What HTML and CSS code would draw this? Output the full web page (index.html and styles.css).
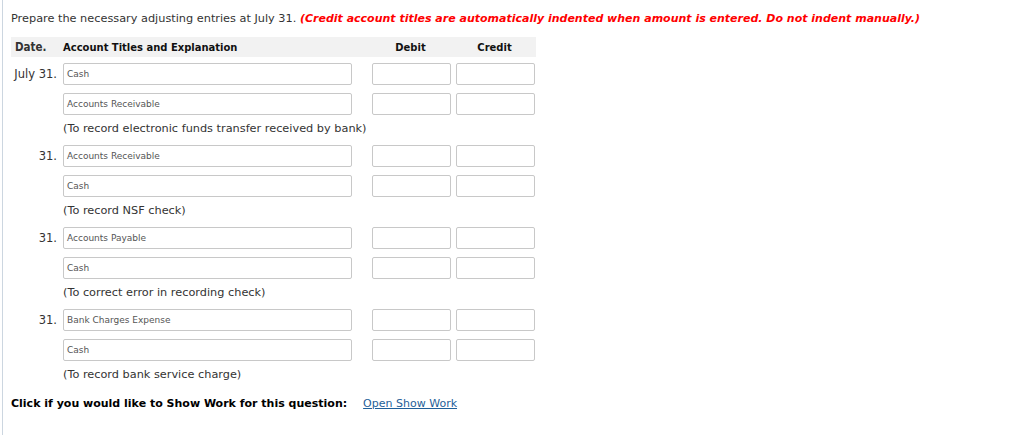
FILE: index.html
```html
<!DOCTYPE html>
<html>
<head>
<meta charset="utf-8">
<link rel="stylesheet" href="styles.css">
</head>
<body>
<div class="page">
  <p class="intro">Prepare the necessary adjusting entries at July 31. <em class="warn">(Credit account titles are automatically indented when amount is entered. Do not indent manually.)</em></p>
  <div class="journal">
    <div class="head">
      <div class="c-date">Date.</div>
      <div class="c-acct">Account Titles and Explanation</div>
      <div class="c-amt">Debit</div>
      <div class="c-amt">Credit</div>
    </div>

    <div class="row">
      <div class="c-date">July 31.</div>
      <div class="c-acct"><div class="field">Cash</div></div>
      <div class="c-amt"><div class="field"></div></div>
      <div class="c-amt"><div class="field"></div></div>
    </div>
    <div class="row">
      <div class="c-date"></div>
      <div class="c-acct"><div class="field">Accounts Receivable</div></div>
      <div class="c-amt"><div class="field"></div></div>
      <div class="c-amt"><div class="field"></div></div>
    </div>
    <div class="expl"><div class="c-date"></div><div class="c-acct">(To record electronic funds transfer received by bank)</div></div>

    <div class="row">
      <div class="c-date">31.</div>
      <div class="c-acct"><div class="field">Accounts Receivable</div></div>
      <div class="c-amt"><div class="field"></div></div>
      <div class="c-amt"><div class="field"></div></div>
    </div>
    <div class="row">
      <div class="c-date"></div>
      <div class="c-acct"><div class="field">Cash</div></div>
      <div class="c-amt"><div class="field"></div></div>
      <div class="c-amt"><div class="field"></div></div>
    </div>
    <div class="expl"><div class="c-date"></div><div class="c-acct">(To record NSF check)</div></div>

    <div class="row">
      <div class="c-date">31.</div>
      <div class="c-acct"><div class="field">Accounts Payable</div></div>
      <div class="c-amt"><div class="field"></div></div>
      <div class="c-amt"><div class="field"></div></div>
    </div>
    <div class="row">
      <div class="c-date"></div>
      <div class="c-acct"><div class="field">Cash</div></div>
      <div class="c-amt"><div class="field"></div></div>
      <div class="c-amt"><div class="field"></div></div>
    </div>
    <div class="expl"><div class="c-date"></div><div class="c-acct">(To correct error in recording check)</div></div>

    <div class="row">
      <div class="c-date">31.</div>
      <div class="c-acct"><div class="field">Bank Charges Expense</div></div>
      <div class="c-amt"><div class="field"></div></div>
      <div class="c-amt"><div class="field"></div></div>
    </div>
    <div class="row">
      <div class="c-date"></div>
      <div class="c-acct"><div class="field">Cash</div></div>
      <div class="c-amt"><div class="field"></div></div>
      <div class="c-amt"><div class="field"></div></div>
    </div>
    <div class="expl"><div class="c-date"></div><div class="c-acct">(To record bank service charge)</div></div>
  </div>
  <p class="showwork"><strong>Click if you would like to Show Work for this question:</strong><a class="link" href="#">Open Show Work</a></p>
</div>
</body>
</html>
```
FILE: styles.css
```css
html, body {
  margin: 0;
  padding: 0;
  background: #fff;
}
body {
  font-family: "DejaVu Sans", Verdana, sans-serif;
  color: #333;
  height: 435px;
  overflow: hidden;
}
.page {
  margin-left: 2px;
  border-left: 1px solid #ccd6e0;
  padding: 11px 0 0 8px;
  height: 424px;
}
.intro {
  margin: 0;
  font-size: 11.3px;
  line-height: 16px;
  color: #333;
}
.warn {
  color: #f00;
  font-size: 11px;
  font-weight: bold;
  font-style: italic;
}
.journal {
  margin-top: 10px;
  width: 525px;
}
.head, .row, .expl {
  display: flex;
  align-items: center;
}
.head {
  height: 20px;
  margin-bottom: 2px;
  background: #f2f2f2;
  font-family: "DejaVu Sans Condensed", "DejaVu Sans", sans-serif;
  font-weight: bold;
  font-size: 11.1px;
  color: #111;
}
.head .c-date {
  text-align: left;
  padding-left: 4px;
  box-sizing: border-box;
}
.head .c-amt {
  text-align: center;
}
.c-date {
  width: 46px;
  text-align: right;
  font-size: 11.5px;
  color: #333;
  flex: none;
}
.c-acct {
  width: 289px;
  margin-left: 6px;
  flex: none;
}
.c-amt {
  width: 77px;
  flex: none;
}
.c-amt:nth-child(3) {
  margin-left: 20px;
}
.c-amt:nth-child(4) {
  margin-left: 7px;
}
.row {
  height: 30px;
}
.field {
  height: 20px;
  border: 1px solid #c8c8c8;
  border-radius: 2px;
  font-size: 9px;
  line-height: 20px;
  padding-left: 3px;
  color: #555;
  box-sizing: content-box;
}
.c-amt .field {
  width: 74px;
}
.expl {
  height: 22px;
  padding-bottom: 3px;
  box-sizing: border-box;
  color: #333;
}
.expl .c-acct {
  font-size: 11.3px;
  white-space: nowrap;
}
.showwork {
  margin: 10px 0 0 0;
  font-size: 11px;
  line-height: 14px;
  color: #000;
}
.showwork strong {
  font-weight: bold;
}
.link {
  margin-left: 16px;
  color: #1f5f99;
  text-decoration: underline;
}
```
